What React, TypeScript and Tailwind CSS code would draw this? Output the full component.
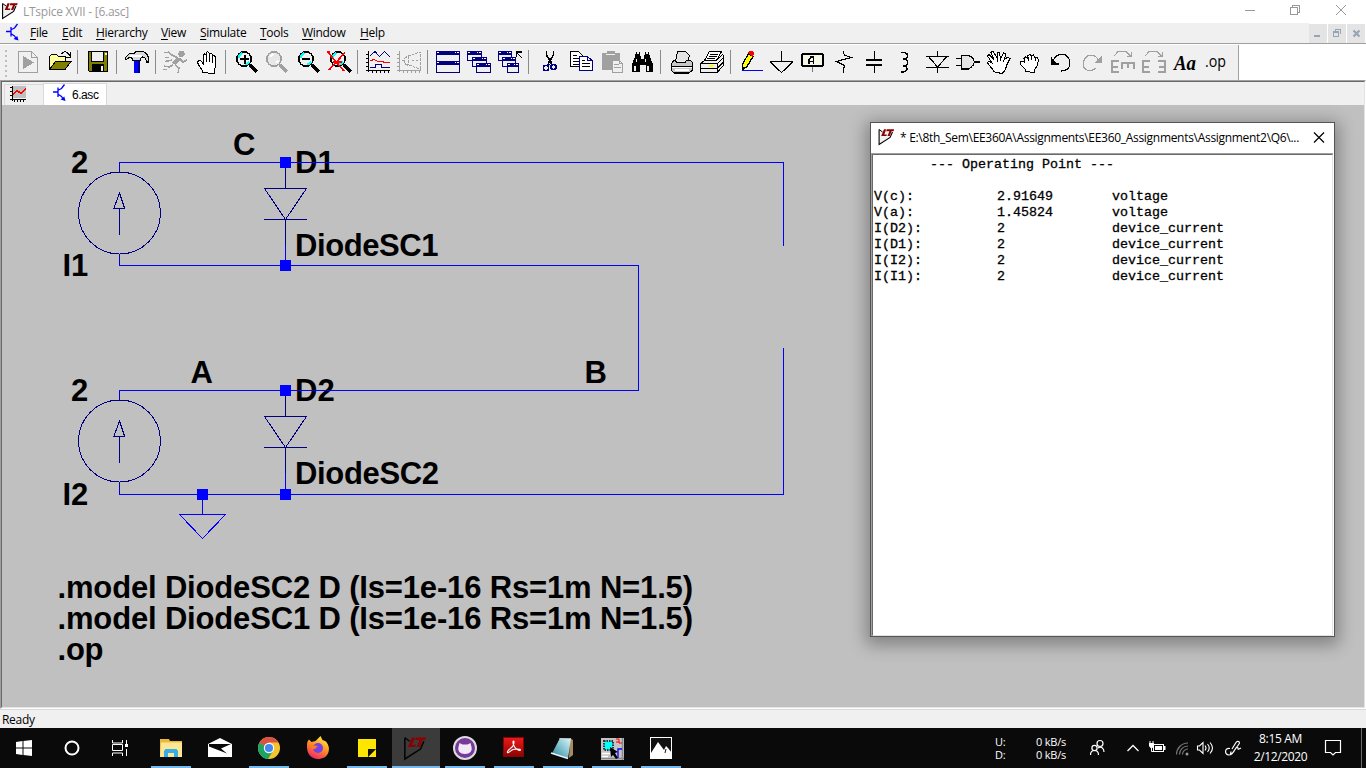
import React from "react";

const UI = "font-['Open_Sans','Noto_Sans',sans-serif]";

/* Drawing cell: uses window coordinates, its box begins at x and y. */
function Cell({ x, w, y = 45, h = 35, children, soft = false }: { x: number; w: number; y?: number; h?: number; children?: React.ReactNode; soft?: boolean }) {
  return (
    <svg className="block shrink-0 overflow-visible" width={w} height={h} viewBox={`${x} ${y} ${w} ${h}`} fill="none" stroke="#000" shapeRendering={soft ? "auto" : "crispEdges"}>
      {children}
    </svg>
  );
}

const Sep = () => <div className="mt-[5px] h-6 w-px shrink-0 bg-[#8c8c8c]" />;

function Lens({ cx, gray = false, sign }: { cx: number; gray?: boolean; sign?: string }) {
  const c = gray ? "#a0a0a0" : "#000";
  return (
    <g>
      <path d={`M${cx + 6} 65l7 7`} stroke={c} strokeWidth="3.4" />
      <circle cx={cx} cy="59" r="7.2" stroke={c} strokeWidth="1.6" fill={gray ? "#e8e8e8" : "#f0f0f0"} />
      {!gray && <path d={`M${cx - 5} 58v-2l3-3M${cx + 1} 64h2l2-2`} stroke="#00ffff" strokeWidth="1.6" />}
      {gray && <path d={`M${cx - 4} 57l3-3M${cx + 2} 63l2-2`} stroke="#fff" strokeWidth="1.6" />}
      {sign && <path d={sign} stroke="#000" strokeWidth="2" />}
    </g>
  );
}

function MiniWindow({ x, y, w = 15, h = 10 }: { x: number; y: number; w?: number; h?: number }) {
  return (
    <g>
      <rect x={x + 0.5} y={y + 0.5} width={w - 1} height={h - 1} fill="#efefef" stroke="#000080" />
      <rect x={x} y={y} width={w} height="4" fill="#000080" stroke="none" />
      <path d={`M${x + 1} ${y + 1.5}h2M${x + w - 5} ${y + 1.5}h1M${x + w - 3} ${y + 1.5}h2`} stroke="#fff" />
    </g>
  );
}

function LtMark({ x, y, s = 1, line = "#000", fill = "#f0f0f0" }: { x: number; y: number; s?: number; line?: string; fill?: string }) {
  return (
    <g transform={`translate(${x} ${y}) scale(${s})`}>
      <path d="M.6 .5v15l11-7L14 3" fill={fill} stroke={line} strokeWidth="1.100" />
      <path d="M.6 .5L4 3" stroke={line} />
      <path d="M5.500 .3h2.200L5.800 5.400h2.600L7.900 7H2.700zM8.300 .3h7.400l-.6 1.900h-2L11.300 7H9l1.900-4.800H7.700z" fill="#8b0000" stroke="none" />
    </g>
  );
}

function Transistor({ x, y }: { x: number; y: number }) {
  return (
    <g transform={`translate(${x} ${y})`} stroke="#0000ff">
      <path d="M0 6.500h4.500M5 2v9.500M5.500 4.500l3-1.500 3-4M5.500 9l3 2 2 3" strokeWidth="1.300" />
      <path d="M12.500 15.500l-5-1.500 3.800-3z" fill="#0000ff" stroke="none" />
    </g>
  );
}

function Toolbar() {
  return (
    <div className="flex h-[35px] w-full shrink-0 bg-white">
      <div className="flex h-full w-[1239px] border-r border-[#a0a0a0] bg-[#f0f0f0]">
        <Cell x={0} w={12}><path d="M5.5 50v27" stroke="#bdbdbd" strokeWidth="2" strokeDasharray="2 3" /></Cell>
        <Cell x={12} w={31}>
          <path d="M18.5 51.5h13l6 6v15h-19zM31.5 51.5v6h6" stroke="#a0a0a0" />
          <path d="M23 56L34 62.5 23 69z" fill="#a0a0a0" stroke="none" />
        </Cell>
        <Cell x={43} w={34}>
          <path d="M49.5 69.5v-13l2-2h5l2 2h7v5" fill="#ffff9c" />
          <path d="M49.5 69.5l6-8h15.5l-6 8z" fill="#808000" />
          <path d="M61.5 54c2-3 5-3 7 0l1.500 2M70.500 52v5h-4.500" />
        </Cell>
        <Sep />
        <Cell x={78} w={38}>
          <path d="M88.500 51.500h19v20h-18l-1-1z" fill="#808000" />
          <rect x="91.500" y="51.500" width="12" height="10" fill="#efefef" />
          <rect x="92" y="64" width="12" height="8" fill="#000" stroke="none" />
          <rect x="101" y="66" width="2" height="5" fill="#efefef" stroke="none" />
          <rect x="105" y="53" width="2" height="2" fill="#efefef" stroke="none" />
        </Cell>
        <Sep />
        <Cell x={117} w={38}>
          <rect x="134" y="61" width="6" height="12" fill="#0000ff" stroke="none" />
          <path d="M139 61v12" stroke="#000080" strokeWidth="2" />
          <path d="M125.500 57.500l4-4 5-.5 1.500-1.500h5c4 0 6.500 3 7.500 6v4.500h-2c0-3-2-5-4-5h-1l-1.500 3.500h-7l-1.500-3-3 .5-2 1.500-1-.5z" fill="#d8d8d8" strokeWidth="1.100" />
          <path d="M130 55.500h12" stroke="#fff" strokeWidth="2" />
        </Cell>
        <Sep />
        <Cell x={156} w={35}>
          <g stroke="#a0a0a0">
            <circle cx="181.500" cy="54" r="2.600" fill="#a0a0a0" />
            <path d="M179 58l-5 6" strokeWidth="4.500" />
            <path d="M178 58l-6-3-4-3M164 52.500h5M165 57.500h4M180 59l3 3 4-2M173 65l-4 2-5-1M163 69.500h4M175 65l4 3-1 5M172 60l-7 1.500" strokeWidth="1.500" />
          </g>
        </Cell>
        <Cell x={191} w={34}>
          <path d="M202.500 72.500v-2l-3-4-2-4 1-2h2l2.500 3v-8.500l1.500-1 1.500 1v-2l1.500-1.500 1.500 1.500v1l2-1 1.500 1.500v2l1.500-1 1.500 1.500v10l-1.500 4v2.500z" fill="#fff" />
          <path d="M206.500 55v7M209.500 53v9M212.500 55v8" />
        </Cell>
        <Sep />
        <Cell x={226} w={36}><Lens cx={244} sign="M240 59h9M244.500 55v9" /></Cell>
        <Cell x={262} w={31}><Lens cx={274} gray /></Cell>
        <Cell x={293} w={31}><Lens cx={306} sign="M302 59h8" /></Cell>
        <Cell x={324} w={33}>
          <Lens cx={338} />
          <path d="M328 52.500l16 18.500M345 52.500l-16 17.500M327 52h3M333 62h9" stroke="#ff0000" strokeWidth="1.600" />
        </Cell>
        <Sep />
        <Cell x={358} w={35}>
          <path d="M368.500 51v21M366 70.500h24M366 54.500h2M366 58.500h2M366 62.500h2M366 66.500h2M372.500 71v2M376.500 71v2M380.500 71v2M384.500 71v2M388.500 71v2" />
          <path d="M370 56l5-4.500 4.500 5 5-5 5.500 5.500M370 67.500h5v-3h6v3h9" stroke="#000080" />
          <path d="M370 61l4-1.500 4 2h4l3 1h5" stroke="#ff0000" strokeWidth="1.300" />
        </Cell>
        <Cell x={393} w={34}>
          <g stroke="#a0a0a0">
            <path d="M399.500 51v21M397 70.500h24M397 54.500h2M397 58.500h2M397 62.500h2M397 66.500h2M403.500 71v2M407.500 71v2M411.500 71v2M415.500 71v2M419.500 71v2" />
            <path d="M404.500 58.500l4-3h2l9-3.500h1v17h-1l-9-3.500h-2l-4-2zM408.500 56v9M402 60.500h2M412 60.500h2M416 60.500h2" strokeDasharray="3 1" />
          </g>
        </Cell>
        <Sep />
        <Cell x={428} w={35}><MiniWindow x={436} y={51} w={24} h={11} /><MiniWindow x={436} y={61} w={24} h={12} /></Cell>
        <Cell x={463} w={32}><MiniWindow x={467} y={51} /><MiniWindow x={472} y={57} /><MiniWindow x={476} y={63} /></Cell>
        <Cell x={495} w={33}>
          <MiniWindow x={498} y={51} w={14} /><MiniWindow x={502} y={57} w={14} /><MiniWindow x={507} y={63} w={12} />
          <path d="M522 58l-5.500-5.500M516.500 57v-5h5" strokeWidth="1.200" />
        </Cell>
        <Sep />
        <Cell x={529} w={36}>
          <path d="M546.500 51v4l5 8M553.500 51v4l-5 8" strokeWidth="1.600" />
          <circle cx="546" cy="68" r="2.600" stroke="#000080" strokeWidth="1.600" />
          <circle cx="553.500" cy="67" r="2.600" stroke="#000080" strokeWidth="1.600" />
          <path d="M549 64l-2 2M551 63l1 2" stroke="#000080" strokeWidth="1.500" />
        </Cell>
        <Cell x={565} w={32}>
          <path d="M570.500 51.500h8l4 4v11h-12z" fill="#fff" />
          <path d="M573 55.500h4M573 58.500h6M573 61.500h6M573 64.500h6" />
          <path d="M579.500 56.500h8l4.500 4v10h-12.500zM587.500 56.500v4h4" fill="#fff" stroke="#000080" />
          <path d="M582 60.500h3M582 63.500h8M582 66.500h8" />
        </Cell>
        <Cell x={597} w={31}>
          <path d="M602 53h5v-2h7v2h5.500v16H602z" fill="#a0a0a0" stroke="#a0a0a0" />
          <path d="M606 54.500h9" stroke="#efefef" />
          <path d="M612.500 60.500h7l3 3v8.500h-10zM619.500 60.500v3h3" fill="#efefef" stroke="#a0a0a0" />
          <path d="M614 64.500h5M614 67.500h7" stroke="#a0a0a0" />
        </Cell>
        <Cell x={628} w={32}>
          <path d="M636 52h4l1 7h3l1-7h4l1 5 3 7v8h-7v-7h-6v7h-8v-8l3-7z" fill="#000" stroke="none" />
          <path d="M637 53h2M646 53h2M636.500 59v3M635 66v5M645.500 59v3M648 66v5" stroke="#efefef" strokeWidth="1.300" />
        </Cell>
        <Sep />
        <Cell x={661} w={36}>
          <path d="M675.500 61l2-9.500h8l4 4-2 6" fill="#e3e3e3" />
          <path d="M674 60.500l-2.500 3v7l2.500 2.500h15l3.500-3v-7.500l-3-2.500h-3l-1 2h-9z" fill="#c8c8c8" />
          <path d="M672 67.500h20M675 70h14" stroke="#fff" strokeWidth="1.500" /><path d="M671 66.500h21M673 72.500h16" />
        </Cell>
        <Cell x={697} w={33}>
          <path d="M704.500 60.500l5-9h12l-5 9z" fill="#fff" />
          <path d="M710 54.500h8M709 56.500h8M707 58.500h8" />
          <path d="M700.500 63.500l4-3h12l6-6 1 1v10l-6.500 7h-16.500zM700.500 63.500h16.500v9M717 64l6-6M701 68.500h16l6-6" fill="#efefef" />
          <path d="M709 66h5" stroke="#ffff00" strokeWidth="2" />
        </Cell>
        <Sep />
        <Cell x={731} w={36}>
          <path d="M742 70.500h21" stroke="#0000ff" />
          <path d="M742.500 69.500v-5l6-11 4.500 3-6 10z" fill="#ffff00" strokeWidth="1.300" />
          <path d="M748 53l1.500-2h3l1.500 2-1 4z" fill="#ff0000" stroke="none" />
          <path d="M742 70v-4l3 2z" fill="#000" stroke="none" />
        </Cell>
        <Cell x={767} w={30}><path d="M781.500 51v11M770 61.500h23M770.500 62l11 10.500 11-10.500" strokeWidth="1.300" /></Cell>
        <Cell x={797} w={31}>
          <rect x="802" y="54" width="21" height="12" rx="2" strokeWidth="2" fill="#f7f7e8" />
          <path d="M809 64v-4l2-3h2.500v7" strokeWidth="1.500" /><path d="M810 61.500h3" />
          <path d="M812.500 67v5" stroke="#777" />
        </Cell>
        <Cell x={828} w={31}><path d="M843.500 51v2l1 2 6.500 2.500-14.500 4 8 4-1 3.500v4" strokeWidth="1.200" /></Cell>
        <Cell x={859} w={31}><path d="M874.500 51v8M874.500 66v7" /><path d="M866 60h16M866 65h16" strokeWidth="2" /></Cell>
        <Cell x={890} w={31}><path d="M901 52.500h3c5 1 5 6 0 6.500h-1M903 59h1c5 .5 5 6.500 0 7h-1M903 66h1c5 1 4 6.500-3 6" strokeWidth="1.400" /></Cell>
        <Cell x={921} w={32}><path d="M937.500 51v5M926 56.500h23M929 57l8.500 10 9-10M926 67.500h23M937.500 67v6" strokeWidth="1.200" /></Cell>
        <Cell x={953} w={31}><path d="M961.500 55.500h7l4 2 2 4.500-2 4.500-4 2.500h-7zM956 58.500h5M956 65.500h5" strokeWidth="1.200" fill="#e5e5e5" /><path d="M974 62h6" strokeWidth="2" /></Cell>
        <Cell x={984} w={30}>
          <path d="M994.500 72l-3-4-4-5 1-1.500 3.500 1.500-4.500-7 1.500-1.500 5 5-3-7 2-1.500 4 7v-6h2.500l1 7 3-6 2.500 1-2 6 4-3 2 1.500-3 6-2 6-3 3z" fill="#fff" />
          <path d="M997 59l1 3M1000.500 58v3M1004 60l-1 2" />
        </Cell>
        <Cell x={1014} w={31}>
          <path d="M1025.500 71.500v-2l-5-5 .5-3h2l1.500 1-.5-4 1.500-1.500 2 1v-2.500l2.500-1 1.500 1.500 2-1 1.500 2.500 2-.5 1.500 2.500-1 6-3 4v3z" fill="#fff" />
          <path d="M1028.500 57v4M1031.500 57v3M1035.500 58l-.5 3" />
        </Cell>
        <Cell x={1045} w={31}>
          <path d="M1053 61c3-8 13-9 16-2 3 8-2 12-8 12" strokeWidth="1.200" />
          <path d="M1051.500 57v7h7" strokeWidth="1.500" /><path d="M1051 58v6h6z" fill="#000" stroke="none" />
        </Cell>
        <Cell x={1076} w={31}>
          <path d="M1099 61c-3-7-12-8-15-1-3 8 3 12 9 10l3-2" strokeWidth="1.300" stroke="#a0a0a0" />
          <path d="M1102 55v8h-8z" fill="#a0a0a0" stroke="none" />
        </Cell>
        <Cell x={1107} w={31}>
          <path d="M1114 56l4-4.500h8l5 5M1131.500 52v4.500h-5" stroke="#a0a0a0" />
          <path d="M1119 61h-7v11h7M1112 66.500h6" stroke="#a0a0a0" strokeWidth="2" />
          <path d="M1121 63h14M1122 62v7M1128 62v6M1134 62v7" stroke="#a0a0a0" strokeWidth="2" />
        </Cell>
        <Cell x={1138} w={32}>
          <path d="M1145 56l4-4.500h8l5 5M1162.500 52v4.500h-5" stroke="#a0a0a0" />
          <path d="M1150 61h-7v11h7M1143 66.500h6M1158 61h7v11h-7M1159 66.500h6" stroke="#a0a0a0" strokeWidth="2" />
        </Cell>
        <Cell x={1170} w={30}><text x="1174" y="70" fill="#000" stroke="none" className="font-['Liberation_Serif',serif] text-[20px] font-bold italic" textLength="22" lengthAdjust="spacingAndGlyphs">Aa</text></Cell>
        <Cell x={1200} w={38}><text x="1205" y="67" fill="#000" stroke="none" className="font-['Open_Sans',sans-serif] text-[17px] font-medium" textLength="21" lengthAdjust="spacingAndGlyphs">.op</text></Cell>
      </div>
    </div>
  );
}

const menus: [string, string][] = [
  ["File", "w-[32px]"], ["Edit", "w-[34px]"], ["Hierarchy", "w-[65px]"], ["View", "w-[39px]"],
  ["Simulate", "w-[60px]"], ["Tools", "w-[42px]"], ["Window", "w-[58px]"], ["Help", "w-[40px]"],
];

function Source({ y, end }: { y: number; end: number }) {
  return (
    <g>
      <g stroke="#000080">
        <circle cx="119.500" cy={y + 51} r="41" />
        <path d={`M119.500 ${y + 31}l-5.500 15h10.500zM119.500 ${y + 46}v27M119.500 ${y + 5}v5M119.500 ${y + 92}v5`} />
      </g>
      <path d={`M119.500 ${y + 9}v-9M119.500 ${y + 93}V${end}`} stroke="#0000c8" />
    </g>
  );
}

function Diode({ y, end }: { y: number; end: number }) {
  return (
    <g>
      <path d={`M285.500 ${y}v26M264 ${y + 26}h43M264.500 ${y + 26}l21 31 21-31M264 ${y + 57}h43M285.500 ${y + 57}v26`} stroke="#000080" />
      <path d={`M285.500 ${y + 82}V${end}`} stroke="#0000ff" />
    </g>
  );
}

const labels: [number, number, string, number?][] = [
  [71, 173, "2"], [233, 154.5, "C"], [295, 173, "D1"], [295, 256, "DiodeSC1", 143.5], [62.5, 276, "I1"],
  [71, 401, "2"], [190.5, 383, "A"], [295, 401, "D2"], [295, 484, "DiodeSC2", 144], [62.5, 505, "I2"], [584.5, 383, "B"],
  [57.5, 598, ".model DiodeSC2 D (Is=1e-16 Rs=1m N=1.5)", 635.5],
  [57.5, 629, ".model DiodeSC1 D (Is=1e-16 Rs=1m N=1.5)", 635.5],
  [57.5, 660, ".op", 46],
];

function Schematic() {
  return (
    <svg className="block" width="1362" height="602" viewBox="2 105 1362 602" fill="none" shapeRendering="crispEdges">
      <g className="font-['Liberation_Sans',sans-serif] text-[31px] font-bold" fill="#000">
        {labels.map(([x, y, t, w], i) => <text key={i} x={x} y={y} textLength={w}>{t}</text>)}
      </g>
      <Source y={162} end={265.500} />
      <Source y={390} end={494.500} />
      <Diode y={162.500} end={265.500} />
      <Diode y={390.500} end={494.500} />
      <path stroke="#0000ff" d="M119 162.500h664.500V246M119 265.500h519.500v125H119M119 494.500h664.500V348M202.500 494v20M179 514.500h47M179.500 514.500l23 24 23-24" />
      <path fill="#0000ff" d="M280 157h11v11h-11zM280 260h11v11h-11zM280 385h11v11h-11zM280 489h11v11h-11zM197 489h11v11h-11z" />
    </svg>
  );
}

const rows = [
  ["V(c):", "2.91649", "voltage"], ["V(a):", "1.45824", "voltage"], ["I(D2):", "2", "device_current"],
  ["I(D1):", "2", "device_current"], ["I(I2):", "2", "device_current"], ["I(I1):", "2", "device_current"],
];

function OperatingPoint() {
  return (
    <section className="absolute left-[868px] top-[17px] flex h-[515px] w-[465px] flex-col border border-[#555] bg-white shadow-[0_4px_16px_4px_rgba(0,0,0,0.32)]">
      <header className="flex h-[30px] items-center">
        <Cell x={871} w={29} y={123} h={30} soft><LtMark x={878.500} y={129} /></Cell>
        <span className={`${UI} w-[407px] whitespace-nowrap text-[12px] tracking-[-0.3px] text-black`}>* E:\8th_Sem\EE360A\Assignments\EE360_Assignments\Assignment2\Q6\...</span>
        <Cell x={1307} w={26} y={123} h={30} soft><path d="M1314 132.500l10 10M1324 132.500l-10 10" strokeWidth="1.200" /></Cell>
      </header>
      <div className="mr-px flex-1 border-l border-t border-[#a0a0a0]">
        <div className="h-full border-b border-l border-r border-t border-b-[#e3e3e3] border-l-[#696969] border-r-[#e3e3e3] border-t-[#696969] pl-px pt-[2px] font-['Liberation_Mono',monospace] text-[13.333px] leading-4 text-black [-webkit-text-stroke:0.3px_#000]">
          <div className="pl-14">--- Operating Point ---</div>
          <div className="h-4" />
          {rows.map((r) => (
            <div key={r[0]} className="grid grid-cols-[123px_115px_1fr]">
              <span>{r[0]}</span><span>{r[1]}</span><span>{r[2]}</span>
            </div>
          ))}
        </div>
      </div>
    </section>
  );
}

function Task({ x, open = false, active = false, children }: { x: number; open?: boolean; active?: boolean; children: React.ReactNode }) {
  return (
    <div className={`relative h-10 w-[49px] shrink-0 ${active ? "border-r border-[#0a0a0a] bg-[#3b3b3b]" : ""}`}>
      <Cell x={x} w={49} y={728} h={40} soft>{children}</Cell>
      {open && <div className={`absolute bottom-0 h-[2px] bg-[#76b9ed] ${active ? "left-0 w-12" : "left-1 w-10"}`} />}
    </div>
  );
}

function Taskbar() {
  return (
    <footer className="flex h-10 w-full shrink-0 bg-[#0a0a0a]">
      <Cell x={0} w={48} y={728} h={40} soft><path d="M16 742l6.500-1v6.500H16zM23.500 741l8.500-1v7.500h-8.500zM16 748.500h6.500v6.500l-6.500-1zM23.500 748.500H32v7.500l-8.500-1z" fill="#fff" stroke="none" /></Cell>
      <Cell x={48} w={48} y={728} h={40} soft><circle cx="72" cy="748" r="6.500" stroke="#fff" strokeWidth="2" /></Cell>
      <Cell x={96} w={51} y={728} h={40} soft>
        <path d="M112.500 740v3h10v-3M112.500 756v-3h10v3M112.500 744.500h10v6h-10zM126.500 740v4M126.500 749v7" stroke="#fff" />
        <rect x="125" y="744" width="3" height="3" fill="#fff" stroke="none" />
      </Cell>
      <Task x={147} open>
        <path d="M160 739h9l1 2h12v15h-22z" fill="#e8b93c" stroke="none" />
        <path d="M161 742.500h21V757h-22z" fill="#ffe694" stroke="none" />
        <path d="M164 757v-6l1.500-2h11l1.500 2v6h-4v-4h-6v4z" fill="#33aee6" stroke="none" />
      </Task>
      <Task x={196}>
        <path d="M208 744l12-6 12 6v13h-24z" fill="#fff" stroke="none" />
        <path d="M209 744h22l-10 4.500 6 5-18-7z" fill="#0a0a0a" stroke="none" />
      </Task>
      <Task x={245} open>
        <g stroke="none">
          <circle cx="269" cy="748" r="11" fill="#f4c430" />
          <path d="M269 748l-9.500-5.500A11 11 0 0 0 268 759l5-8z" fill="#1da462" />
          <path d="M259.500 742.500A11 11 0 0 1 278.500 742.500H269l-5 3z" fill="#dd5144" />
          <circle cx="269" cy="748" r="5.200" fill="#fff" /><circle cx="269" cy="748" r="4.100" fill="#4688f1" />
        </g>
      </Task>
      <Task x={294}>
        <defs><linearGradient id="ff" x1=".8" y1="0" x2=".3" y2="1"><stop offset="0" stopColor="#fff44f" /><stop offset=".45" stopColor="#ff9a1f" /><stop offset="1" stopColor="#f0226b" /></linearGradient></defs>
        <path d="M307 745c0-2 .5-4 2-5.500l2.500 2.500 4-1 5-5 2 4 3.500 1.500c3 4 3.500 7 2.500 10.500-1.500 5-6 7-10.500 7-6.500 0-11-5-11-11.500z" fill="url(#ff)" stroke="none" />
        <circle cx="318" cy="748" r="5" fill="#7542e5" stroke="none" />
        <path d="M310 745c3 0 5 1 8 1l-3 3c-3 0-5-1-5-4z" fill="#ff7b1c" stroke="none" />
      </Task>
      <Task x={343} open>
        <path d="M358 739h18v10l-8 8h-10z" fill="#ffe600" stroke="none" /><path d="M376 749v8h-8z" fill="#ffe600" stroke="none" />
        <path d="M368 749h8l-8 8z" fill="#111" stroke="none" />
      </Task>
      <Task x={392} open active><LtMark x={404} y={737} s={1.420} fill="none" line="#050505" /></Task>
      <Task x={441} open>
        <circle cx="465" cy="748" r="11" fill="#76399c" stroke="#ddd" strokeWidth="2" />
        <path d="M459.500 743l3 1.500h5l3-1.500 1 4c1 4-1.500 7-6.500 7s-7.500-3-6.500-7z" fill="#f1e9f5" stroke="none" />
      </Task>
      <Task x={490} open>
        <defs><linearGradient id="pdf" x1="0" y1="0" x2="0" y2="1"><stop offset="0" stopColor="#ef1a1a" /><stop offset="1" stopColor="#8c0303" /></linearGradient></defs>
        <rect x="503.500" y="737.500" width="20" height="19" fill="url(#pdf)" stroke="#8c0303" />
        <path d="M507.500 752.500c-1-1 3-4 5-6 1.500-2 2-5.500 1-5.500s-.5 4 1.500 6.500c1.500 2 5 3.500 5.500 2.500s-5-1.500-7.500-.5-4.500 4-5.500 3z" stroke="#fff" strokeWidth="1.100" />
      </Task>
      <Task x={539} open>
        <defs><linearGradient id="np" x1="1" y1="0" x2="0" y2="1"><stop offset="0" stopColor="#e3f5f8" /><stop offset=".5" stopColor="#7fc0cf" /><stop offset="1" stopColor="#2b7f98" /></linearGradient></defs>
        <path d="M570 738l3 2v15l-4 3z" fill="#a98a5a" stroke="none" />
        <path d="M560 738l11 .5-3 20-16-5z" fill="url(#np)" stroke="none" />
        <path d="M551 753l17 5.500" stroke="#e8f4f6" strokeWidth="1.500" /><path d="M559.500 738.500h12" stroke="#ccc" strokeDasharray="1 1" />
      </Task>
      <Task x={588} open>
        <rect x="601" y="738" width="23" height="22" fill="#c4c4c4" stroke="none" />
        <path d="M601 758.500h23M622.500 738v22" stroke="#888" strokeWidth="1.500" />
        <rect x="604" y="741" width="9" height="9" fill="#00ffff" stroke="#333" strokeWidth="2" strokeDasharray="1.500 1" />
        <path d="M616 739h3v4h3M616 742h3" stroke="#f00" /><path d="M622 749h-4v9" stroke="#00f" strokeWidth="1.300" />
        <path d="M602 753.500h8M602 756.500h6" stroke="#fff" strokeWidth="1.500" />
        <path d="M610 747l8 5-3 1 3 5-2 1-3-4-2 2z" fill="#000" stroke="none" />
      </Task>
      <Task x={637} open>
        <rect x="650.500" y="737.500" width="21" height="21" fill="#111" stroke="#fff" />
        <path d="M651 753l7-11 6 8 2-4 2 2 4 5v6h-21z" fill="#fff" stroke="none" /><path d="M666 749l-1 4" stroke="#111" />
      </Task>
      <div className={`ml-[309px] mt-[7px] grid h-[26px] w-[89px] grid-cols-[41px_1fr] content-start text-[11px] leading-[13px] text-white ${UI} tracking-[-0.2px]`}>
        <span>U:</span><span>0 kB/s</span><span>D:</span><span>0 kB/s</span>
      </div>
      <Cell x={1084} w={36} y={728} h={40} soft>
        <g stroke="#fff" strokeWidth="1.200"><circle cx="1100" cy="743.500" r="3" /><circle cx="1094.500" cy="748" r="2.600" /><path d="M1090.500 755c0-6 8-6 8 0M1098 748c3-2 6 0 6 4" /></g>
      </Cell>
      <Cell x={1120} w={24} y={728} h={40} soft><path d="M1127.500 751l5.500-5.500 5.500 5.500" stroke="#fff" strokeWidth="1.300" /></Cell>
      <Cell x={1144} w={27} y={728} h={40} soft>
        <rect x="1153.500" y="744.500" width="10" height="7" stroke="#fff" /><path d="M1155 746h7v4h-7zM1164 746h1.500v4h-1.500zM1149 743h5v3l-1.500 2h-2l-1.500-2z" fill="#fff" stroke="none" /><path d="M1150 741v3M1153 741v3M1151.500 747v4.500h2" stroke="#fff" />
      </Cell>
      <Cell x={1171} w={22} y={728} h={40} soft><g stroke="#777" strokeWidth="1.200"><path d="M1176.500 754.500c0-6 5-11.500 11.500-11.500M1179.500 754.500c0-5 4-8.500 8.500-8.500M1182.500 754.500c0-3 2.500-5.500 5.500-5.500" /><circle cx="1187" cy="754" r="1.500" fill="#999" stroke="none" /></g></Cell>
      <Cell x={1193} w={26} y={728} h={40} soft><path d="M1197.500 746h2l3.500-3.500v11l-3.500-3.500h-2zM1205 745.500q2 2.500 0 5M1207.500 744q3.500 4 0 8M1210 742.500q5 5.500 0 11" stroke="#fff" strokeWidth="1.100" /></Cell>
      <Cell x={1219} w={34} y={728} h={40} soft><path d="M1232 749l4-6.500c1.500-2.500 4.500-.5 3 1.500l-6.500 9-2 1 .5-2.500M1230 748.500c-6-1-5.500 6-1 6.500 5 0 6-8 8-8s0 3 2 2l2-1" stroke="#fff" strokeWidth="1.200" /></Cell>
      <div className={`flex h-10 w-[55px] flex-col items-center whitespace-nowrap pt-[2px] text-[12px] leading-[18px] tracking-[-0.350px] text-white ${UI}`}><span>8:15 AM</span><span>2/12/2020</span></div>
      <Cell x={1308} w={58} y={728} h={40} soft><path d="M1325.500 740.500h15v12h-5l-2.500 2.500-2.500-2.500h-5z" stroke="#fff" strokeWidth="1.200" /><path d="M1361.500 728v40" stroke="#6b6b6b" /></Cell>
    </footer>
  );
}

export default function App() {
  return (
    <main className="flex h-[768px] w-[1366px] flex-col overflow-hidden bg-white">
      <header className="flex h-[23px] shrink-0 items-center">
        <Cell x={0} w={23} y={0} h={23} soft><LtMark x={2} y={3} /></Cell>
        <span className={`${UI} w-[1207px] text-[12px] tracking-[-0.250px] text-[#999]`}>LTspice XVII - [6.asc]</span>
        <Cell x={1230} w={136} y={0} h={23}>
          <g stroke="#999"><path d="M1245 10.500h10M1290.500 7.500h7v7h-7zM1292.500 7v-1.500h7v7h-2" /><path shapeRendering="auto" d="M1336 5l10 10M1346 5l-10 10" /></g>
        </Cell>
      </header>
      <nav className="flex h-5 shrink-0 items-center bg-[#f0f0f0]">
        <Cell x={0} w={30} y={23} h={20} soft><Transistor x={6} y={25} /></Cell>
        <div className={`${UI} flex w-[1279px] text-[12px] leading-5 tracking-[-0.3px] text-black`}>
          {menus.map(([m, w]) => <span key={m} className={`${w} whitespace-nowrap`}><span className="underline underline-offset-2">{m[0]}</span>{m.slice(1)}</span>)}
        </div>
        <div className="flex h-5 w-[57px] gap-px bg-white pt-px">
          <div className="w-[18px] bg-[#e4e4e4]"><Cell x={1309} w={18} y={24} h={18}><path d="M1314 36h6" stroke="#96a5b6" strokeWidth="2" /></Cell></div>
          <div className="w-[18px] bg-[#e4e4e4]"><Cell x={1328} w={18} y={24} h={18}><path d="M1333.500 32.500h5v4h-5zM1333 32h6M1335.500 31v-1.500h5v4h-1" stroke="#96a5b6" strokeWidth="1.300" /></Cell></div>
          <div className="w-[18px] bg-[#e4e4e4]"><Cell x={1347} w={18} y={24} h={18} soft><path d="M1353.500 30.500l6 6M1359.500 30.500l-6 6" stroke="#96a5b6" strokeWidth="2.200" /></Cell></div>
        </div>
      </nav>
      <div className="h-[2px] shrink-0 border-t border-[#a0a0a0] bg-white" />
      <Toolbar />
      <div className="flex h-[629px] shrink-0 flex-col border-b border-l border-r border-t border-b-white border-l-[#a0a0a0] border-r-white border-t-[#a0a0a0]">
        <div className="flex h-full flex-col border-b border-l border-r border-t border-b-[#e3e3e3] border-l-[#696969] border-r-[#e3e3e3] border-t-[#696969]">
          <div className="flex h-[23px] shrink-0 items-end bg-[#f0f0f0]">
            <div className="ml-[2px] h-[21px] w-[39px] border-l border-t border-[#d9d9d9]">
              <Cell x={5} w={38} y={85} h={20}>
                <rect x="12" y="86" width="14" height="12" fill="#c0c0c0" stroke="none" />
                <path d="M12.500 86v15M10 99.500h16M10 87.500h2M10 91.500h2M10 95.500h2M14.500 100v2M17.500 100v2M20.500 100v2M23.500 100v2" strokeWidth="1.300" />
                <path d="M13 94l4-3 4 2 5-4" stroke="#f00" strokeWidth="1.500" />
              </Cell>
            </div>
            <div className="flex h-[22px] w-16 items-center border-x border-t border-[#d9d9d9] bg-white">
              <Cell x={45} w={28} y={84} h={21} soft><Transistor x={54} y={85.500} /></Cell>
              <span className="font-['Liberation_Sans',sans-serif] text-[12px] tracking-[-0.450px] text-black">6.asc</span>
            </div>
          </div>
          <div className="relative h-[602px] shrink-0 bg-[#c0c0c0]">
            <Schematic />
            <OperatingPoint />
          </div>
        </div>
      </div>
      <div className={`${UI} flex h-[19px] shrink-0 items-center border-t border-[#d9d9d9] bg-[#f0f0f0] pl-[2px] pt-[2px] text-[12px] leading-4 tracking-[-0.3px] text-black`}>Ready</div>
      <Taskbar />
    </main>
  );
}
